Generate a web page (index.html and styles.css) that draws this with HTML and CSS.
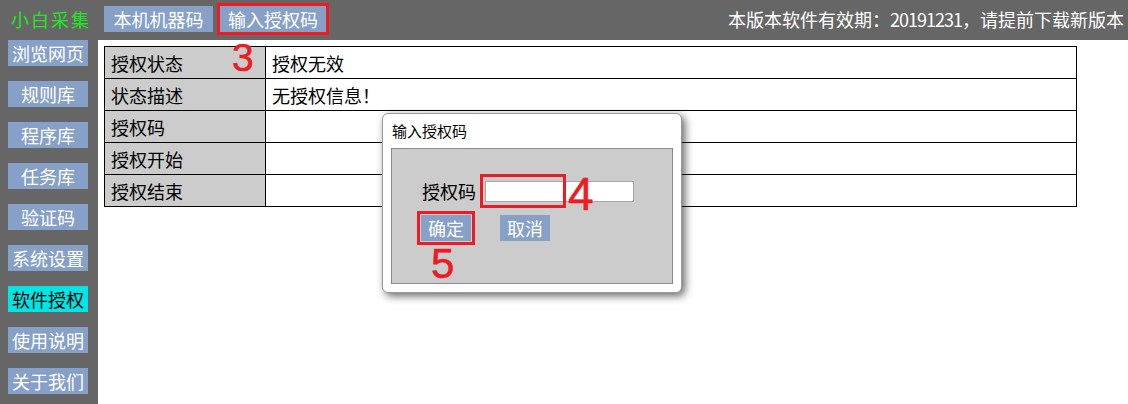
FILE: index.html
```html
<!DOCTYPE html>
<html lang="zh-CN">
<head>
<meta charset="utf-8">
<title>小白采集 - 软件授权</title>
<link rel="stylesheet" href="styles.css">
</head>
<body>
<div class="app">
  <header class="topbar">
    <div class="logo">小白采集</div>
    <nav class="topnav">
      <button class="btn top-btn w109">本机机器码</button>
      <button class="btn top-btn w106 marked">输入授权码</button>
    </nav>
    <div class="notice">本版本软件有效期：<span class="digits">20191231</span>，请提前下载新版本</div>
  </header>
  <div class="layout">
    <aside class="sidebar">
      <button class="btn side-btn">浏览网页</button>
      <button class="btn side-btn">规则库</button>
      <button class="btn side-btn">程序库</button>
      <button class="btn side-btn">任务库</button>
      <button class="btn side-btn">验证码</button>
      <button class="btn side-btn">系统设置</button>
      <button class="btn side-btn active">软件授权</button>
      <button class="btn side-btn">使用说明</button>
      <button class="btn side-btn">关于我们</button>
    </aside>
    <main class="content">
      <table class="info">
        <tr><td class="label">授权状态</td><td class="value">授权无效</td></tr>
        <tr><td class="label">状态描述</td><td class="value">无授权信息！</td></tr>
        <tr><td class="label">授权码</td><td class="value"></td></tr>
        <tr><td class="label">授权开始</td><td class="value"></td></tr>
        <tr><td class="label">授权结束</td><td class="value"></td></tr>
      </table>
    </main>
  </div>

  <div class="dialog">
    <div class="dialog-title">输入授权码</div>
    <div class="dialog-panel">
      <div class="field-row">
        <span class="field-label">授权码</span>
        <input class="field-input" type="text">
      </div>
      <div class="btn-row">
        <button class="btn dlg-btn marked-ok">确定</button>
        <button class="btn dlg-btn">取消</button>
      </div>
    </div>
  </div>

  <div class="mark-box input-box"></div>
  <span class="anno n3">3</span>
  <span class="anno n4">4</span>
  <span class="anno n5">5</span>
</div>
</body>
</html>
```

FILE: styles.css
```css
* { box-sizing: border-box; }

html, body {
  margin: 0;
  padding: 0;
  background: #ffffff;
}

body {
  font-family: "Noto Sans CJK SC", "Noto Sans", sans-serif;
  font-size: 18px;
  color: #000;
}

.app {
  position: relative;
  width: 1128px;
  height: 404px;
  overflow: hidden;
}

.topbar {
  height: 40px;
  background: #666666;
  display: flex;
  align-items: flex-start;
  padding: 6px 4px 0 11px;
}

.logo {
  color: #22e622;
  font-size: 18px;
  letter-spacing: 2px;
  line-height: 26px;
  width: 80px;
}

.topnav {
  display: flex;
  gap: 7px;
  margin-left: 13px;
}

.btn {
  border: none;
  padding: 0;
  margin: 0;
  font-family: inherit;
  font-size: 18px;
  color: #ffffff;
  background: #86a0c7;
  height: 26px;
  line-height: 26px;
  text-align: center;
  cursor: pointer;
  white-space: nowrap;
}

.w109 { width: 109px; }
.w106 { width: 106px; }

.marked {
  outline: 3px solid #ed1c24;
}

.notice {
  margin-left: auto;
  color: #ffffff;
  line-height: 26px;
  white-space: nowrap;
}

.digits {
  letter-spacing: -1px;
}

.layout {
  display: flex;
  height: 364px;
}

.sidebar {
  width: 98px;
  background: #666666;
  display: flex;
  flex-direction: column;
  gap: 15px;
  padding-left: 8px;
}

.side-btn {
  width: 80px;
  flex: none;
}

.side-btn.active {
  background: #00e5e5;
  color: #000;
}

.content {
  flex: 1;
  padding: 6px 0 0 6px;
}

.info {
  border-collapse: collapse;
  width: 973px;
  border: 1px solid #000;
}

.info td {
  border: 1px solid #000;
  height: 32px;
  padding: 0 6px;
  line-height: 20px;
  vertical-align: middle;
  white-space: nowrap;
}

.info .label {
  width: 161px;
  background: #cccccc;
}

.info .value {
  background: #ffffff;
}

.dialog {
  position: absolute;
  left: 382px;
  top: 113px;
  width: 300px;
  height: 180px;
  background: #ffffff;
  border: 1px solid #9a9a9a;
  border-radius: 6px;
  box-shadow: 3px 3px 9px rgba(0, 0, 0, 0.6);
  padding: 0 8px 8px 8px;
  display: flex;
  flex-direction: column;
}

.dialog-title {
  height: 34px;
  line-height: 34px;
  font-size: 15px;
  padding-left: 1px;
}

.dialog-panel {
  flex: 1;
  background: #cccccc;
  border: 1px solid #8a8a8a;
  padding: 32px 0 0 29px;
}

.field-row {
  display: flex;
  align-items: center;
  gap: 9px;
  padding-left: 1px;
  height: 21px;
}

.field-label {
  font-size: 18px;
  line-height: 21px;
}

.field-input {
  width: 149px;
  height: 21px;
  border: 1px solid #a8a8a8;
  background: #ffffff;
  padding: 0 2px;
  margin: 0;
  font-family: inherit;
  font-size: 14px;
  outline: none;
}

.btn-row {
  display: flex;
  gap: 29px;
  margin-top: 13px;
}

.dlg-btn {
  width: 50px;
}

.marked-ok {
  outline: 3px solid #ed1c24;
  outline-offset: 1px;
}

.mark-box {
  position: absolute;
  border: 3px solid #ed1c24;
}

.input-box {
  left: 480px;
  top: 174px;
  width: 86px;
  height: 34px;
}

.anno {
  position: absolute;
  font-family: "Liberation Sans", Arial, sans-serif;
  color: #ed1c24;
  line-height: 1;
  -webkit-text-stroke: 0.6px #ed1c24;
}

.n3 { left: 232px; top: 38px; font-size: 39px; }
.n4 { left: 568px; top: 171px; font-size: 46px; }
.n5 { left: 431px; top: 243px; font-size: 42px; }
```
